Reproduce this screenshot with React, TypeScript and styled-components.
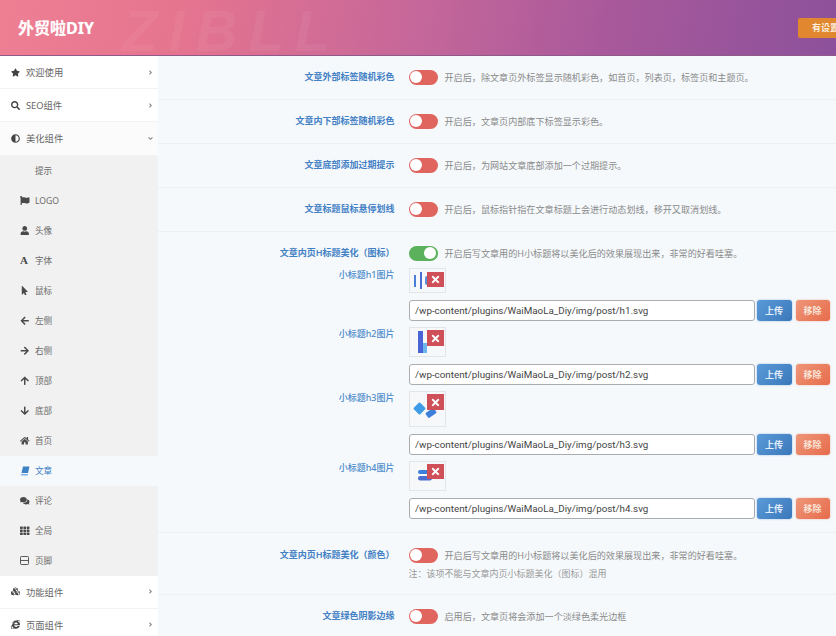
import styled, { createGlobalStyle } from "styled-components";
import {
  FaStar, FaSearch, FaAdjust, FaFlag, FaUser, FaMousePointer, FaArrowLeft, FaArrowRight,
  FaArrowUp, FaArrowDown, FaHome, FaComments, FaTh, FaCubes,
  FaInternetExplorer, FaTimes, FaAngleRight, FaAngleDown,
} from "react-icons/fa";
import type { ReactNode } from "react";

const GlobalStyle = createGlobalStyle`
  html, body { margin: 0; padding: 0; height: 636px; overflow: hidden; background: #f5f9fc; }
  body { font-family: "Noto Sans", "Noto Sans CJK SC", sans-serif; }
  * { box-sizing: border-box; }
`;

// ------ small drawn icons ------
const SlantBook = () => (
  <svg width="10" height="10" viewBox="0 0 10 10">
    <path d="M3 .5h6.5L8 7H1.5z" fill="currentColor" />
    <path d="M1 8h7l-.3 1.4H1.6A.9.9 0 0 1 1 8z" fill="#7fb2e4" />
  </svg>
);

const FooterIcon = () => (
  <svg width="9" height="9" viewBox="0 0 9 9" fill="none" stroke="currentColor" strokeWidth="0.9">
    <rect x="0.5" y="0.5" width="8" height="8" rx="0.8" />
    <path d="M0.5 4.5h8" />
  </svg>
);

// ------ menu data ------
const subMenu: { label: string; icon?: ReactNode; active?: boolean }[] = [
  { label: "提示" },
  { label: "LOGO", icon: <FaFlag /> },
  { label: "头像", icon: <FaUser /> },
  { label: "字体", icon: <SerifGlyph>A</SerifGlyph> },
  { label: "鼠标", icon: <FaMousePointer /> },
  { label: "左侧", icon: <FaArrowLeft /> },
  { label: "右侧", icon: <FaArrowRight /> },
  { label: "顶部", icon: <FaArrowUp /> },
  { label: "底部", icon: <FaArrowDown /> },
  { label: "首页", icon: <FaHome /> },
  { label: "文章", icon: <SlantBook />, active: true },
  { label: "评论", icon: <FaComments /> },
  { label: "全局", icon: <FaTh /> },
  { label: "页脚", icon: <FooterIcon /> },
];

// thumbnails, drawn in the preview's own coordinates
const H1Art = () => (
  <svg width="35" height="23" viewBox="0 0 35 23">
    <rect x="4" y="6" width="2" height="12" fill="#4a7fd6" />
    <rect x="10" y="3" width="2" height="17" fill="#4a6fd0" />
    <rect x="15" y="7" width="4" height="9" rx="2" fill="#5b8fd8" />
  </svg>
);
const H2Art = () => (
  <svg width="35" height="28" viewBox="0 0 35 28">
    <rect x="8" y="3" width="5" height="22" fill="#4a63d6" />
    <rect x="13" y="15" width="4" height="10" fill="#6db6ee" />
  </svg>
);
const H3Art = () => (
  <svg width="35" height="34" viewBox="0 0 35 34">
    <rect x="5" y="12" width="9" height="9" rx="1" transform="rotate(45 9.5 16.5)" fill="#3f9be6" />
    <rect x="16" y="18" width="10" height="6" rx="1" transform="rotate(-35 21 21)" fill="#3f7fdc" />
  </svg>
);
const H4Art = () => (
  <svg width="35" height="28" viewBox="0 0 35 28">
    <rect x="8" y="8" width="12" height="4" rx="2" fill="#3f7fdc" />
    <rect x="8" y="14" width="14" height="4.5" rx="2.2" fill="#4a6fd0" />
  </svg>
);

const images = [
  { name: "小标题h1图片", file: "h1.svg", art: <H1Art />, h: 25, badgeTop: 3, badgeH: 15 },
  { name: "小标题h2图片", file: "h2.svg", art: <H2Art />, h: 30, badgeTop: 2, badgeH: 16 },
  { name: "小标题h3图片", file: "h3.svg", art: <H3Art />, h: 36, badgeTop: 2, badgeH: 16 },
  { name: "小标题h4图片", file: "h4.svg", art: <H4Art />, h: 30, badgeTop: 2, badgeH: 15 },
];

const switches = [
  { label: "文章外部标签随机彩色", desc: "开启后，除文章页外标签显示随机彩色，如首页，列表页，标签页和主题页。" },
  { label: "文章内下部标签随机彩色", desc: "开启后，文章页内部底下标签显示彩色。" },
  { label: "文章底部添加过期提示", desc: "开启后，为网站文章底部添加一个过期提示。" },
  { label: "文章标题鼠标悬停划线", desc: "开启后，鼠标指针指在文章标题上会进行动态划线，移开又取消划线。" },
];

const App = () => {
  return (
    <Page>
      <GlobalStyle />
      <Header>
        <Watermark>ZIBLL</Watermark>
        <Title>外贸啦DIY</Title>
        <SaveBadge>有设置</SaveBadge>
      </Header>
      <Body>
        <Sidebar>
          <TopItem>
            <TopIcon><FaStar /></TopIcon>欢迎使用<Caret><FaAngleRight /></Caret>
          </TopItem>
          <TopItem>
            <TopIcon><FaSearch /></TopIcon>SEO组件<Caret><FaAngleRight /></Caret>
          </TopItem>
          <TopItem $open>
            <TopIcon><FaAdjust /></TopIcon>美化组件<Caret><FaAngleDown /></Caret>
          </TopItem>
          <SubList>
            {subMenu.map((m) => (
              <SubItem key={m.label} $active={m.active}>
                <SubIcon $active={m.active}>{m.icon}</SubIcon>
                {m.label}
              </SubItem>
            ))}
          </SubList>
          <TopItem>
            <TopIcon><FaCubes /></TopIcon>功能组件<Caret><FaAngleRight /></Caret>
          </TopItem>
          <TopItem>
            <TopIcon><FaInternetExplorer /></TopIcon>页面组件<Caret><FaAngleRight /></Caret>
          </TopItem>
        </Sidebar>
        <Content>
          {switches.map((s) => (
            <Row key={s.label}>
              <Label>{s.label}</Label>
              <Field>
                <SwitchLine>
                  <Toggle />
                  <Desc>{s.desc}</Desc>
                </SwitchLine>
              </Field>
            </Row>
          ))}

          <TallRow>
            <Label>文章内页H标题美化（图标）</Label>
            <Field>
              <SwitchLine>
                <Toggle $on />
                <Desc>开启后写文章用的H小标题将以美化后的效果展现出来，非常的好看哇塞。</Desc>
              </SwitchLine>
            </Field>
            <ImageList>
              {images.map((img) => (
                <ImageGroup key={img.file}>
                  <SubLabel>{img.name}</SubLabel>
                  <div>
                    <Preview $h={img.h}>
                      {img.art}
                      <RemoveBadge $top={img.badgeTop} $h={img.badgeH}>
                        <FaTimes />
                      </RemoveBadge>
                    </Preview>
                    <UploadLine>
                      <PathInput readOnly value={`/wp-content/plugins/WaiMaoLa_Diy/img/post/${img.file}`} />
                      <UploadButton>上传</UploadButton>
                      <RemoveButton>移除</RemoveButton>
                    </UploadLine>
                  </div>
                </ImageGroup>
              ))}
            </ImageList>
          </TallRow>

          <NoteRow>
            <Label>文章内页H标题美化（颜色）</Label>
            <Field>
              <SwitchLine>
                <Toggle />
                <Desc>开启后写文章用的H小标题将以美化后的效果展现出来，非常的好看哇塞。</Desc>
              </SwitchLine>
              <Note>注：该项不能与文章内页小标题美化（图标）混用</Note>
            </Field>
          </NoteRow>

          <Row>
            <Label>文章绿色阴影边缘</Label>
            <Field>
              <SwitchLine>
                <Toggle />
                <Desc>启用后，文章页将会添加一个淡绿色柔光边框</Desc>
              </SwitchLine>
            </Field>
          </Row>
        </Content>
      </Body>
    </Page>
  );
};

export default App;

// ------ component styles ------
function SerifGlyph({ children }: { children: ReactNode }) {
  return <SerifGlyphText>{children}</SerifGlyphText>;
}

const Page = styled.div`
  width: 836px;
  height: 636px;
  overflow: hidden;
`;

const Header = styled.header`
  position: relative;
  height: 56px;
  padding-left: 18px;
  display: flex;
  align-items: center;
  justify-content: space-between;
  overflow: hidden;
  border-bottom: 1px solid #8f5a8a;
  background: linear-gradient(100deg, #ee7f93 0%, #e5748f 22%, #c5679a 50%, #a9599b 72%, #8c519b 100%);
`;

const Watermark = styled.span`
  position: absolute;
  left: 122px;
  top: 2px;
  font-family: "Liberation Sans", sans-serif;
  font-size: 58px;
  line-height: 1;
  font-weight: 700;
  font-style: italic;
  letter-spacing: 11px;
  color: rgba(255, 255, 255, 0.05);
`;

const Title = styled.h1`
  margin: 0;
  position: relative;
  top: -1px;
  font-size: 16px;
  font-weight: 700;
  color: #fff;
  text-shadow: 0 0 1px rgba(255, 255, 255, 0.4);
`;

const SaveBadge = styled.span`
  position: relative;
  width: 38px;
  height: 20px;
  line-height: 19px;
  padding-left: 14px;
  border-radius: 2px 0 0 2px;
  overflow: hidden;
  white-space: nowrap;
  background: #e0872f;
  color: #fbeedd;
  font-size: 9px;
  font-weight: 700;
`;

const Body = styled.div`
  display: flex;
  height: 580px;
`;

const Sidebar = styled.nav`
  width: 158px;
  flex: none;
  background: #f1f1f1;
  box-shadow: 1px 0 2px rgba(0, 0, 0, 0.03);
`;

const TopItem = styled.div<{ $open?: boolean }>`
  height: 33.2px;
  display: flex;
  align-items: center;
  padding-left: 11px;
  background: ${(p) => (p.$open ? "#fbfbfb" : "#fff")};
  border-bottom: 1px solid #f3f3f3;
  color: #666;
  font-size: 9.3px;
`;

const TopIcon = styled.span`
  width: 15px;
  display: inline-flex;
  font-size: 9px;
  color: #444;
`;

const Caret = styled.span`
  margin-left: auto;
  margin-right: 4px;
  display: inline-flex;
  font-size: 7px;
  color: #888;
`;

const SubList = styled.div`
  background: #f1f1f1;
`;

const SubItem = styled.div<{ $active?: boolean }>`
  height: 30px;
  display: flex;
  align-items: center;
  padding-left: 20px;
  font-size: 8.6px;
  background: ${(p) => (p.$active ? "#f5f9fc" : "transparent")};
  color: ${(p) => (p.$active ? "#3f82c4" : "#6a6a6a")};
`;

const SubIcon = styled.span<{ $active?: boolean }>`
  width: 15px;
  display: inline-flex;
  font-size: 9.5px;
  color: ${(p) => (p.$active ? "#3f82c4" : "#4a4a4a")};
`;

const SerifGlyphText = styled.span`
  font-family: "Liberation Serif", serif;
  font-size: 11px;
  line-height: 1;
  font-weight: 700;
`;

const Content = styled.main`
  flex: 1;
  min-width: 0;
  background: #f5f9fc;
`;

const Row = styled.section`
  display: grid;
  grid-template-columns: 236.5px 1fr;
  column-gap: 14px;
  height: 44px;
  padding-top: 13px;
  border-bottom: 1px solid #edf1f4;
`;

const TallRow = styled(Row)`
  height: 301px;
  align-content: start;
`;

const NoteRow = styled(Row)`
  height: 62px;
  padding-top: 14px;
`;

const Label = styled.div`
  text-align: right;
  font-size: 9px;
  line-height: 15px;
  font-weight: 600;
  color: #4380c4;
  white-space: nowrap;
`;

const Field = styled.div`
  min-width: 0;
`;

const SwitchLine = styled.div`
  display: flex;
  align-items: center;
  gap: 7px;
  height: 16px;
`;

const Toggle = styled.span<{ $on?: boolean }>`
  position: relative;
  width: 29px;
  height: 15px;
  flex: none;
  border-radius: 8px;
  background: ${(p) => (p.$on ? "#5cb25c" : "#e0655f")};

  &::after {
    content: "";
    position: absolute;
    top: 1.5px;
    ${(p) => (p.$on ? "right: 1.5px;" : "left: 1.5px;")}
    width: 12px;
    height: 12px;
    border-radius: 50%;
    background: #fff;
  }
`;

const Desc = styled.span`
  font-size: 9.1px;
  color: #8a8a8a;
  white-space: nowrap;
`;

const Note = styled.div`
  margin-top: 4px;
  font-size: 9px;
  line-height: 14px;
  color: #999;
`;

const ImageList = styled.div`
  grid-column: 1 / -1;
  padding-top: 7px;
`;

const ImageGroup = styled.div`
  display: grid;
  grid-template-columns: 236.5px 1fr;
  column-gap: 14px;
`;

const SubLabel = styled.div`
  text-align: right;
  font-size: 9px;
  line-height: 14px;
  font-weight: 500;
  color: #4d8bcb;
`;

const Preview = styled.div<{ $h: number }>`
  position: relative;
  width: 37px;
  height: ${(p) => p.$h}px;
  display: flex;
  background: #f7f8f9;
  border: 1px solid #e3e6e8;
`;

const RemoveBadge = styled.span<{ $top: number; $h: number }>`
  position: absolute;
  top: ${(p) => p.$top}px;
  left: 17px;
  width: 17px;
  height: ${(p) => p.$h}px;
  display: flex;
  align-items: center;
  justify-content: center;
  background: #cf5058;
  color: #fff;
  font-size: 11px;
`;

const UploadLine = styled.div`
  margin-top: 7px;
  margin-bottom: 6px;
  display: flex;
  align-items: center;
  height: 21px;
`;

const PathInput = styled.input`
  width: 346px;
  height: 21px;
  padding: 0 5.5px;
  border: 1px solid #a9adb0;
  border-radius: 3px;
  background: #fff;
  color: #444;
  font-family: Roboto, sans-serif;
  font-size: 9.8px;
  outline: none;
`;

const UploadButton = styled.button`
  width: 35px;
  height: 21px;
  margin-left: 2px;
  padding: 0;
  border: none;
  border-radius: 3px;
  background: linear-gradient(135deg, #5b9ad8, #3a78bb);
  box-shadow: 0 0 2px rgba(60, 120, 190, 0.5);
  color: #e4effa;
  font-family: inherit;
  font-size: 9px;
  font-weight: 600;
`;

const RemoveButton = styled(UploadButton)`
  width: 34px;
  margin-left: 4px;
  background: linear-gradient(135deg, #ee9678, #e66c4c);
  box-shadow: 0 0 2px rgba(230, 110, 80, 0.5);
  color: #f9e2d6;
`;
